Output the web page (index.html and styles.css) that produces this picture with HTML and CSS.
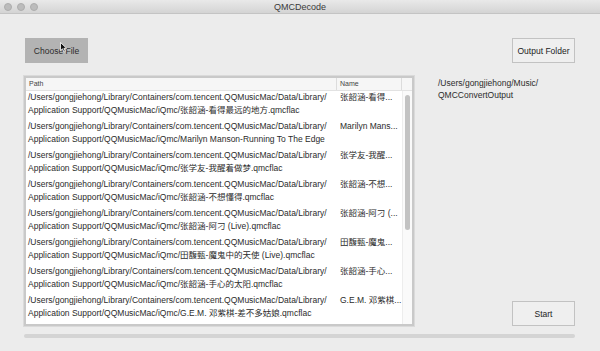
FILE: index.html
```html
<!DOCTYPE html>
<html lang="zh">
<head>
    <meta charset="UTF-8">
    <title>QMCDecode</title>
    <link rel="stylesheet" href="styles.css">
</head>
<body>
    <div class="window">
        <div class="titlebar">
            <div class="lights">
                <span class="light"></span>
                <span class="light"></span>
                <span class="light"></span>
            </div>
            <div class="title">QMCDecode</div>
        </div>

        <div class="content">
            <div class="top-row">
                <button class="btn btn-pressed">Choose File
                    <svg class="cursor" width="8" height="11" viewBox="0 0 8 11">
                        <path d="M0.5 0.5 L0.5 8.5 L2.5 6.8 L4 10 L5.3 9.4 L3.9 6.3 L6.6 6.3 Z" fill="#111" stroke="#fff" stroke-width="0.8"/>
                    </svg>
                </button>
                <button class="btn">Output Folder</button>
            </div>

            <div class="main">
                <div class="table">
                    <div class="table-head">
                        <div class="col-path">Path</div>
                        <div class="col-name">Name</div>
                        <div class="col-rest"></div>
                    </div>
                    <div class="table-body">
                        <div class="rows">
                            <div class="row">
                                <div class="col-path">/Users/gongjiehong/Library/Containers/com.tencent.QQMusicMac/Data/Library/<br>Application Support/QQMusicMac/iQmc/张韶涵-看得最远的地方.qmcflac</div>
                                <div class="col-name">张韶涵-看得...</div>
                            </div>
                            <div class="row">
                                <div class="col-path">/Users/gongjiehong/Library/Containers/com.tencent.QQMusicMac/Data/Library/<br>Application Support/QQMusicMac/iQmc/Marilyn Manson-Running To The Edge</div>
                                <div class="col-name">Marilyn Mans...</div>
                            </div>
                            <div class="row">
                                <div class="col-path">/Users/gongjiehong/Library/Containers/com.tencent.QQMusicMac/Data/Library/<br>Application Support/QQMusicMac/iQmc/张学友-我醒着做梦.qmcflac</div>
                                <div class="col-name">张学友-我醒...</div>
                            </div>
                            <div class="row">
                                <div class="col-path">/Users/gongjiehong/Library/Containers/com.tencent.QQMusicMac/Data/Library/<br>Application Support/QQMusicMac/iQmc/张韶涵-不想懂得.qmcflac</div>
                                <div class="col-name">张韶涵-不想...</div>
                            </div>
                            <div class="row">
                                <div class="col-path">/Users/gongjiehong/Library/Containers/com.tencent.QQMusicMac/Data/Library/<br>Application Support/QQMusicMac/iQmc/张韶涵-阿刁 (Live).qmcflac</div>
                                <div class="col-name">张韶涵-阿刁 (...</div>
                            </div>
                            <div class="row">
                                <div class="col-path">/Users/gongjiehong/Library/Containers/com.tencent.QQMusicMac/Data/Library/<br>Application Support/QQMusicMac/iQmc/田馥甄-魔鬼中的天使 (Live).qmcflac</div>
                                <div class="col-name">田馥甄-魔鬼...</div>
                            </div>
                            <div class="row">
                                <div class="col-path">/Users/gongjiehong/Library/Containers/com.tencent.QQMusicMac/Data/Library/<br>Application Support/QQMusicMac/iQmc/张韶涵-手心的太阳.qmcflac</div>
                                <div class="col-name">张韶涵-手心...</div>
                            </div>
                            <div class="row">
                                <div class="col-path">/Users/gongjiehong/Library/Containers/com.tencent.QQMusicMac/Data/Library/<br>Application Support/QQMusicMac/iQmc/G.E.M. 邓紫棋-差不多姑娘.qmcflac</div>
                                <div class="col-name">G.E.M. 邓紫棋...</div>
                            </div>
                            <div class="row">
                                <div class="col-path">/Users/gongjiehong/Library/Containers/com.tencent.QQMusicMac/Data/Library/<br>Application Support/QQMusicMac/iQmc/张韶涵-若你碰到他.qmcflac</div>
                                <div class="col-name">张韶涵-若你...</div>
                            </div>
                        </div>
                        <div class="scrollbar">
                            <div class="thumb"></div>
                        </div>
                    </div>
                </div>

                <div class="side">
                    <p class="output-path">/Users/gongjiehong/Music/<br>QMCConvertOutput</p>
                    <button class="btn">Start</button>
                </div>
            </div>

            <div class="progress"></div>
        </div>
    </div>
</body>
</html>
```

FILE: styles.css
```css
* {
    margin: 0;
    padding: 0;
    box-sizing: border-box;
}

body {
    font-family: 'Liberation Sans', 'Noto Sans CJK SC', sans-serif;
    background: #ececec;
    color: #2b2b2b;
}

.window {
    width: 600px;
    height: 351px;
    background: #ececec;
    overflow: hidden;
}

.titlebar {
    position: relative;
    height: 14px;
    background: linear-gradient(#e9e9e9, #d4d4d4);
    border-bottom: 1px solid #c4c4c4;
    display: flex;
    align-items: center;
    justify-content: center;
}

.lights {
    position: absolute;
    left: 4px;
    top: 3px;
    display: flex;
    gap: 5px;
}

.light {
    width: 8px;
    height: 8px;
    border-radius: 50%;
    background: #bcbcbc;
    border: 1px solid #adadad;
}

.title {
    font-size: 9px;
    color: #3a3a3a;
}

.content {
    padding: 24px 25px 0 24px;
}

.top-row {
    display: flex;
    justify-content: space-between;
    padding-left: 1px;
}

.btn {
    position: relative;
    width: 63px;
    height: 25px;
    font-family: inherit;
    font-size: 8.5px;
    color: #222;
    background: #efefef;
    border: 1px solid #c2c2c2;
}

.btn-pressed {
    background: #b3b3b3;
    border-color: #b3b3b3;
    color: #2c2c2c;
}

.cursor {
    position: absolute;
    left: 34px;
    top: 3px;
}

.main {
    display: flex;
    margin-top: 13px;
    height: 250px;
}

.table {
    width: 390px;
    height: 250px;
    border: 2px solid #c9c9c9;
    outline: 1px solid #dadada;
    background: #fff;
    display: flex;
    flex-direction: column;
    font-size: 8.5px;
}

.table-head {
    display: flex;
    height: 13px;
    flex-shrink: 0;
    background: #f6f6f6;
    border-bottom: 1px solid #e2e2e2;
    font-size: 7px;
    color: #444;
    line-height: 12px;
}

.table-head .col-path {
    width: 311px;
    padding-left: 3px;
    border-right: 1px solid #dcdcdc;
}

.table-head .col-name {
    width: 65px;
    padding-left: 3px;
    border-right: 1px solid #dcdcdc;
}

.table-head .col-rest {
    flex: 1;
}

.table-body {
    flex: 1;
    display: flex;
    min-height: 0;
}

.rows {
    flex: 1;
    min-height: 0;
    overflow: hidden;
}

.row {
    display: flex;
    height: 29px;
    line-height: 13px;
}

.row .col-path {
    width: 312px;
    padding-left: 2px;
    white-space: nowrap;
}

.row .col-name {
    width: 62px;
    padding-left: 2px;
    white-space: nowrap;
}

.scrollbar {
    width: 10px;
    background: #fafafa;
    border-left: 1px solid #ededed;
    padding: 4px 2px;
}

.thumb {
    width: 5px;
    height: 135px;
    border-radius: 3px;
    background: #c2c2c2;
}

.side {
    flex: 1;
    display: flex;
    flex-direction: column;
    justify-content: space-between;
    align-items: flex-end;
    padding-left: 24px;
}

.output-path {
    align-self: flex-start;
    font-size: 8.5px;
    line-height: 12px;
    padding-top: 1px;
}

.progress {
    margin-top: 8px;
    height: 4px;
    width: 551px;
    border-radius: 2px;
    background: #d4d4d4;
}
```
